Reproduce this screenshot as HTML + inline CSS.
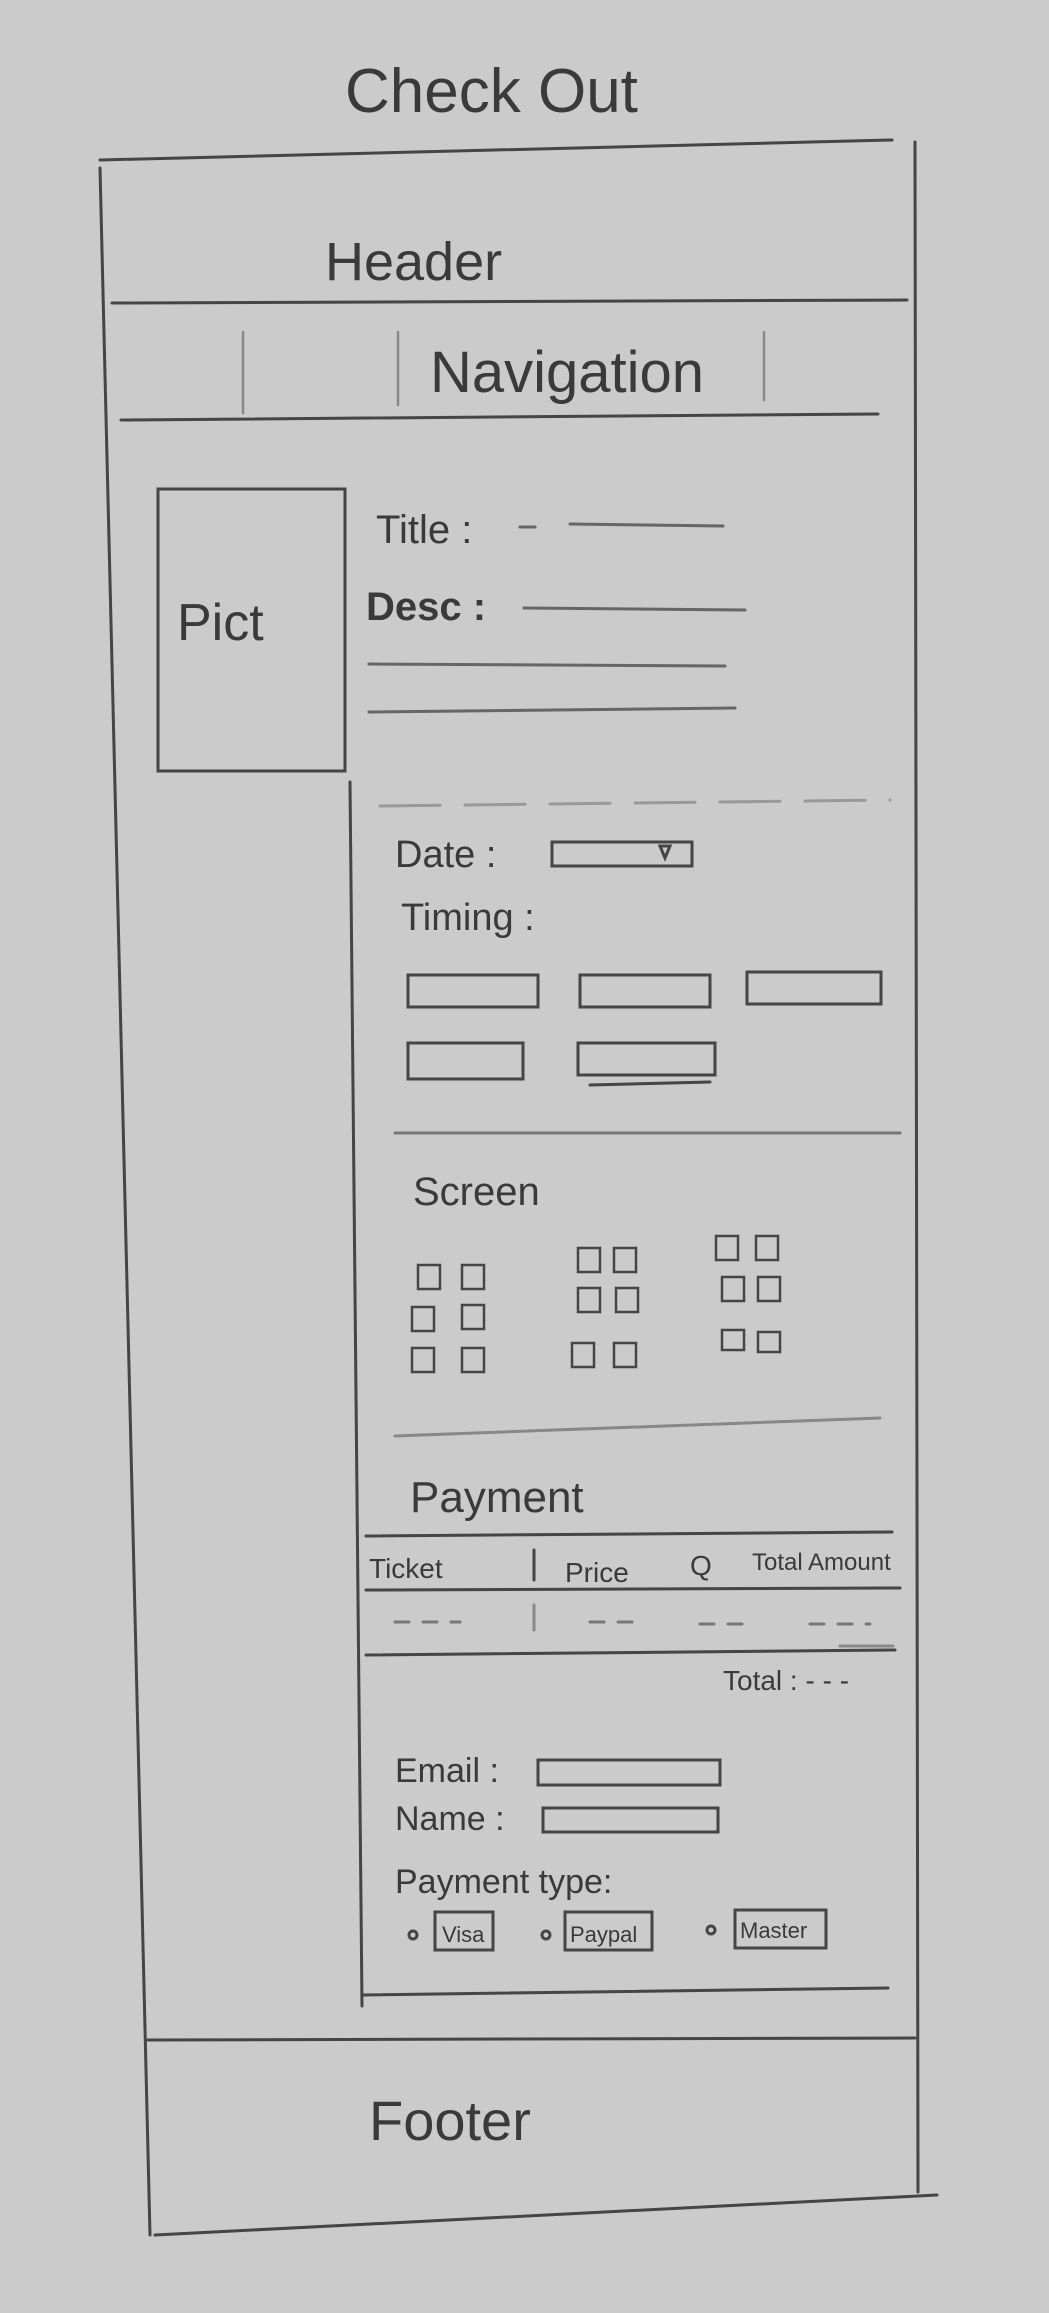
<!DOCTYPE html>
<html><head><meta charset="utf-8"><style>
html,body{margin:0;padding:0;background:#cbcbcb;}
svg{display:block}
text{font-family:"Liberation Sans",sans-serif;fill:#3a3a3a}
</style></head><body>
<svg width="1049" height="2313" viewBox="0 0 1049 2313" xmlns="http://www.w3.org/2000/svg">
<rect width="1049" height="2313" fill="#cbcbcb"/>
<g stroke="#454545" stroke-width="3" fill="none" stroke-linecap="round">
<!-- outer frame -->
<line x1="100" y1="160" x2="892" y2="140"/>
<line x1="915" y1="142" x2="918" y2="2192"/>
<line x1="100" y1="168" x2="150" y2="2235"/>
<line x1="155" y1="2235" x2="937" y2="2195"/>
<line x1="112" y1="303" x2="907" y2="300"/>
<line x1="121" y1="420" x2="878" y2="414"/>
<line x1="148" y1="2040" x2="915" y2="2038"/>
<!-- nav bars -->
<g stroke="#888" stroke-width="2.5">
<line x1="243" y1="332" x2="243" y2="413"/>
<line x1="398" y1="332" x2="398" y2="405"/>
<line x1="764" y1="332" x2="764" y2="400"/>
</g>
<!-- pict -->
<rect x="158" y="489" width="187" height="282"/>
<line x1="350" y1="782" x2="362" y2="2006"/>
<!-- title/desc lines -->
<g stroke="#666">
<line x1="520" y1="527" x2="535" y2="527"/>
<line x1="570" y1="524" x2="723" y2="526"/>
<line x1="524" y1="608" x2="745" y2="610"/>
<line x1="369" y1="664" x2="725" y2="666"/>
<line x1="369" y1="712" x2="735" y2="708"/>
</g>
<line x1="380" y1="806" x2="890" y2="800" stroke="#999" stroke-dasharray="60 25"/>
<!-- date -->
<rect x="552" y="842" width="140" height="24"/>
<path d="M660 846 l10 0 l-5 12 z"/>
<!-- timing boxes -->
<rect x="408" y="975" width="130" height="32"/>
<rect x="580" y="975" width="130" height="32"/>
<rect x="747" y="972" width="134" height="32"/>
<rect x="408" y="1043" width="115" height="36"/>
<rect x="578" y="1043" width="137" height="32"/>
<line x1="590" y1="1085" x2="710" y2="1082"/>
<line x1="395" y1="1133" x2="900" y2="1133" stroke="#777"/>
<!-- seats -->
<g stroke-width="2.5">
<rect x="418" y="1265" width="22" height="24"/><rect x="462" y="1265" width="22" height="24"/>
<rect x="412" y="1307" width="22" height="24"/><rect x="462" y="1305" width="22" height="24"/>
<rect x="412" y="1348" width="22" height="24"/><rect x="462" y="1348" width="22" height="24"/>
<rect x="578" y="1248" width="22" height="24"/><rect x="614" y="1248" width="22" height="24"/>
<rect x="578" y="1288" width="22" height="24"/><rect x="616" y="1288" width="22" height="24"/>
<rect x="572" y="1343" width="22" height="24"/><rect x="614" y="1343" width="22" height="24"/>
<rect x="716" y="1236" width="22" height="24"/><rect x="756" y="1236" width="22" height="24"/>
<rect x="722" y="1277" width="22" height="24"/><rect x="758" y="1277" width="22" height="24"/>
<rect x="722" y="1330" width="22" height="20"/><rect x="758" y="1332" width="22" height="20"/>
</g>
<line x1="395" y1="1436" x2="880" y2="1418" stroke="#888"/>
<!-- payment table -->
<line x1="366" y1="1536" x2="892" y2="1532"/>
<line x1="366" y1="1590" x2="900" y2="1588"/>
<line x1="534" y1="1550" x2="534" y2="1580"/>
<line x1="534" y1="1605" x2="534" y2="1630" stroke="#888"/>
<g stroke="#777" stroke-dasharray="14 14">
<line x1="395" y1="1622" x2="460" y2="1622"/>
<line x1="590" y1="1622" x2="645" y2="1622"/>
<line x1="700" y1="1624" x2="745" y2="1624"/>
<line x1="810" y1="1624" x2="870" y2="1624"/>
</g>
<line x1="366" y1="1655" x2="895" y2="1650"/>
<line x1="840" y1="1646" x2="893" y2="1646" stroke="#888"/>
<!-- form boxes -->
<rect x="538" y="1760" width="182" height="25"/>
<rect x="543" y="1808" width="175" height="24"/>
<circle cx="413" cy="1935" r="4"/>
<rect x="435" y="1912" width="58" height="38"/>
<circle cx="546" cy="1935" r="4"/>
<rect x="565" y="1912" width="87" height="38"/>
<circle cx="711" cy="1930" r="4"/>
<rect x="735" y="1910" width="91" height="38"/>
<line x1="362" y1="1995" x2="888" y2="1988"/>
</g>
<text x="345" y="112" font-size="62">Check Out</text>
<text x="325" y="280" font-size="54">Header</text>
<text x="430" y="392" font-size="58" fill="#777">Navigation</text>
<text x="177" y="640" font-size="52">Pict</text>
<text x="376" y="543" font-size="40">Title :</text>
<text x="366" y="620" font-size="40" font-weight="bold">Desc :</text>
<text x="395" y="867" font-size="38">Date :</text>
<text x="401" y="930" font-size="38">Timing :</text>
<text x="413" y="1205" font-size="40">Screen</text>
<text x="410" y="1512" font-size="44">Payment</text>
<text x="369" y="1578" font-size="28">Ticket</text>
<text x="565" y="1582" font-size="28">Price</text>
<text x="690" y="1575" font-size="28">Q</text>
<text x="752" y="1570" font-size="24">Total Amount</text>
<text x="723" y="1690" font-size="28">Total : - - -</text>
<text x="395" y="1782" font-size="34">Email :</text>
<text x="395" y="1830" font-size="34">Name :</text>
<text x="395" y="1893" font-size="34">Payment type:</text>
<text x="442" y="1942" font-size="22">Visa</text>
<text x="570" y="1942" font-size="22">Paypal</text>
<text x="740" y="1938" font-size="22">Master</text>
<text x="369" y="2140" font-size="56">Footer</text>
</svg>
</body></html>
